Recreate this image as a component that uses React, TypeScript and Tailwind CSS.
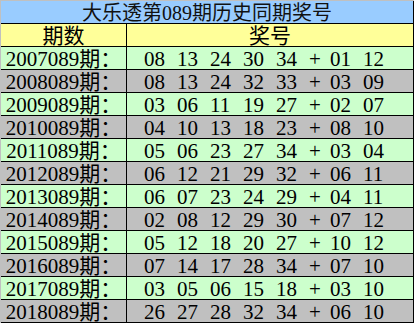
import React from "react"

type Draw = { issue: string; front: string[]; back: string[] }

const draws: Draw[] = [
  { issue: "2007089", front: ["08", "13", "24", "30", "34"], back: ["01", "12"] },
  { issue: "2008089", front: ["08", "13", "24", "32", "33"], back: ["03", "09"] },
  { issue: "2009089", front: ["03", "06", "11", "19", "27"], back: ["02", "07"] },
  { issue: "2010089", front: ["04", "10", "13", "18", "23"], back: ["08", "10"] },
  { issue: "2011089", front: ["05", "06", "23", "27", "34"], back: ["03", "04"] },
  { issue: "2012089", front: ["06", "12", "21", "29", "32"], back: ["06", "11"] },
  { issue: "2013089", front: ["06", "07", "23", "24", "29"], back: ["04", "11"] },
  { issue: "2014089", front: ["02", "08", "12", "29", "30"], back: ["07", "12"] },
  { issue: "2015089", front: ["05", "12", "18", "20", "27"], back: ["10", "12"] },
  { issue: "2016089", front: ["07", "14", "17", "28", "34"], back: ["07", "10"] },
  { issue: "2017089", front: ["03", "05", "06", "15", "18"], back: ["03", "10"] },
  { issue: "2018089", front: ["26", "27", "28", "32", "34"], back: ["06", "10"] },
]

export default function App() {
  return (
    <div className="w-[414px] h-[323px] bg-white font-['Liberation_Serif','Noto_Sans_CJK_SC',serif] text-black">
      <div className="border-l border-t border-[#c0c0c0]">
        {/* 标题 */}
        <div className="h-[23px] border-b border-r border-black bg-[#99ccff] pt-[2px] text-center text-[20px] leading-[20px] text-[#111]">
          大乐透第089期历史同期奖号
        </div>

        {/* 表头 */}
        <div className="flex h-[23px] border-b border-black bg-[#ffff99] text-[21px] leading-[22px]">
          <div className="w-[126px] border-r border-black pt-[1px] text-center">期数</div>
          <div className="w-[287px] border-r border-black pt-[1px] text-center">奖号</div>
        </div>

        {draws.map((d, i) => (
          <div
            key={d.issue}
            className={`flex h-[23px] border-b border-black text-[21px] leading-[22px] ${
              i % 2 === 0 ? "bg-[#ccffcc]" : "bg-[#c0c0c0]"
            }`}
          >
            <div className="w-[126px] border-r border-black pt-[1px] text-center whitespace-nowrap">
              {d.issue}期：
            </div>
            <div className="flex w-[287px] border-r border-black pl-[17px] pt-[1px] whitespace-nowrap">
              {d.front.map((n, j) => (
                <span key={j} className="w-[33px]">
                  {n}
                </span>
              ))}
              <span className="w-[21px]">+</span>
              {d.back.map((n, j) => (
                <span key={j} className="w-[33px]">
                  {n}
                </span>
              ))}
            </div>
          </div>
        ))}
      </div>
    </div>
  )
}
